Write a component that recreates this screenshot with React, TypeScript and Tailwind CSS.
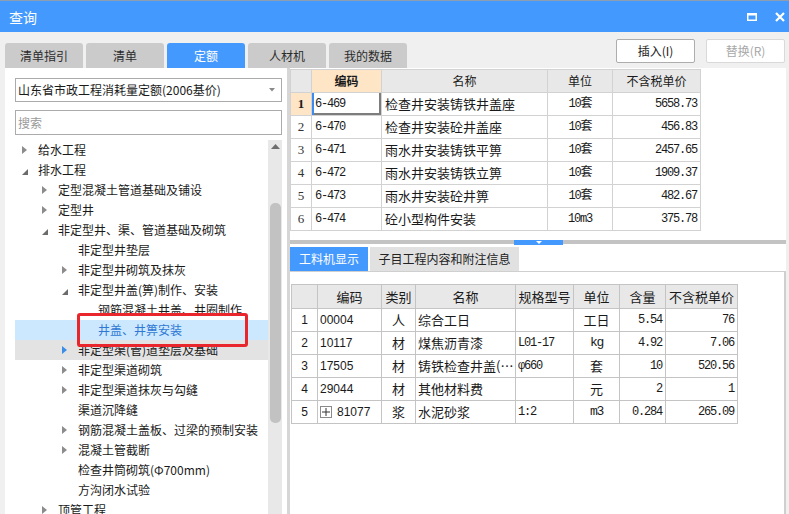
import React from "react";

type TreeNode = {
  level: number;
  arrow: "open" | "closed" | "none";
  text: string;
  state?: "selected" | "hover" | "clipped";
};

const treeData: TreeNode[] = [
  { level: 0, arrow: "closed", text: "给水工程" },
  { level: 0, arrow: "open", text: "排水工程" },
  { level: 1, arrow: "closed", text: "定型混凝土管道基础及铺设" },
  { level: 1, arrow: "closed", text: "定型井" },
  { level: 1, arrow: "open", text: "非定型井、渠、管道基础及砌筑" },
  { level: 2, arrow: "none", text: "非定型井垫层" },
  { level: 2, arrow: "closed", text: "非定型井砌筑及抹灰" },
  { level: 2, arrow: "open", text: "非定型井盖(箅)制作、安装" },
  { level: 3, arrow: "none", text: "钢筋混凝土井盖、井圈制作", state: "clipped" },
  { level: 3, arrow: "none", text: "井盖、井箅安装", state: "selected" },
  { level: 2, arrow: "closed", text: "非定型渠(管)道垫层及基础", state: "hover" },
  { level: 2, arrow: "closed", text: "非定型渠道砌筑" },
  { level: 2, arrow: "closed", text: "非定型渠道抹灰与勾缝" },
  { level: 2, arrow: "none", text: "渠道沉降缝" },
  { level: 2, arrow: "closed", text: "钢筋混凝土盖板、过梁的预制安装" },
  { level: 2, arrow: "closed", text: "混凝土管截断" },
  { level: 2, arrow: "none", text: "检查井筒砌筑(Φ700mm)" },
  { level: 2, arrow: "none", text: "方沟闭水试验" },
  { level: 1, arrow: "closed", text: "顶管工程" },
];

const indent = ["pl-[7px]", "pl-[27px]", "pl-[47px]", "pl-[67px]"];

const quotaRows = [
  { code: "6-469", name: "检查井安装铸铁井盖座", unit: "10套", price: "5658.73" },
  { code: "6-470", name: "检查井安装砼井盖座", unit: "10套", price: "456.83" },
  { code: "6-471", name: "雨水井安装铸铁平箅", unit: "10套", price: "2457.65" },
  { code: "6-472", name: "雨水井安装铸铁立箅", unit: "10套", price: "1909.37" },
  { code: "6-473", name: "雨水井安装砼井箅", unit: "10套", price: "482.67" },
  { code: "6-474", name: "砼小型构件安装", unit: "10m3", price: "375.78" },
];

const resRows = [
  { code: "00004", type: "人", name: "综合工日", spec: "", unit: "工日", qty: "5.54", price: "76" },
  { code: "10117", type: "材", name: "煤焦沥青漆", spec: "L01-17", unit: "kg", qty: "4.92", price: "7.06" },
  { code: "17505", type: "材", name: "铸铁检查井盖(…", spec: "φ660", unit: "套", qty: "10", price: "520.56" },
  { code: "29044", type: "材", name: "其他材料费", spec: "", unit: "元", qty: "2", price: "1" },
  { code: "81077", type: "浆", name: "水泥砂浆", spec: "1:2", unit: "m3", qty: "0.284", price: "265.09", plus: true },
];

const mono = "font-['Liberation_Mono','Noto_Sans_CJK_SC',monospace] tracking-[-1.2px]";

const Arrow = ({ kind, hover }: { kind: TreeNode["arrow"]; hover?: boolean }) => {
  if (kind === "closed") {
    return (
      <svg width="5" height="8" viewBox="0 0 5 8">
        <path d="M0 0L5 4L0 8Z" fill={hover ? "#3b8de8" : "#8c8c8c"} />
      </svg>
    );
  }
  if (kind === "open") {
    return (
      <svg width="6" height="6" viewBox="0 0 6 6" className="mt-[4px]">
        <path d="M6 0L6 6L0 6Z" fill="#6b6b6b" />
      </svg>
    );
  }
  return null;
};

const TreeRow = ({ node }: { node: TreeNode }) => {
  const bg =
    node.state === "selected"
      ? "bg-[#cce8ff] text-[#2f78d4]"
      : node.state === "hover"
        ? "bg-[#e3e3e3] text-[#1a1a1a]"
        : "text-[#1a1a1a]";
  return (
    <div className={`h-[20px] flex items-center shrink-0 ${indent[node.level]} ${bg}`}>
      <div className="w-[16px] h-[20px] flex items-center">
        <Arrow kind={node.arrow} hover={node.state === "hover"} />
      </div>
      {node.state === "clipped" ? (
        <div className="h-[13px] self-start overflow-hidden leading-[20px] whitespace-nowrap">{node.text}</div>
      ) : (
        <span className="whitespace-nowrap leading-[20px]">{node.text}</span>
      )}
    </div>
  );
};

const TopTab = ({ label, active }: { label: string; active?: boolean }) => (
  <div
    className={`w-[78px] h-[25px] rounded-t-[3px] flex items-center justify-center ${
      active ? "bg-[#4499ff] text-white" : "bg-[#cbcbcb] text-[#2b2b2b]"
    }`}
  >
    {label}
  </div>
);

export default function App() {
  return (
    <div className="w-[789px] h-[514px] overflow-hidden bg-[#f0f0f0] flex flex-col font-['Noto_Sans_CJK_SC','Noto_Sans',sans-serif] text-[12px] text-[#1a1a1a]">
      {/* title bar */}
      <div className="h-[32px] shrink-0 bg-[#4499ff] border-t border-[#8e9db0] flex items-center justify-between pl-[9px] pr-[3px]">
        <span className="text-white text-[14px] leading-none">查询</span>
        <div className="flex items-center gap-[18px] pr-[1px]">
          <svg width="10" height="8" viewBox="0 0 10 8">
            <rect x="0.75" y="1.25" width="8.5" height="6" fill="none" stroke="#fff" strokeWidth="1.5" />
            <rect x="0" y="0" width="10" height="2.5" fill="#fff" />
          </svg>
          <svg width="10" height="10" viewBox="0 0 10 10">
            <path d="M1 1L9 9M9 1L1 9" stroke="#fff" strokeWidth="2.2" />
          </svg>
        </div>
      </div>

      {/* tabs and buttons */}
      <div className="h-[36px] shrink-0 flex justify-between pl-[5px] pr-[4px]">
        <div className="flex gap-[3px] self-end">
          <TopTab label="清单指引" />
          <TopTab label="清单" />
          <TopTab label="定额" active />
          <TopTab label="人材机" />
          <TopTab label="我的数据" />
        </div>
        <div className="flex gap-[11px] mt-[7px]">
          <button className="w-[79px] h-[24px] bg-white border border-[#adadad] rounded-[2px] text-[#222]">插入(I)</button>
          <button className="w-[79px] h-[24px] bg-white border border-[#d9d9d9] rounded-[2px] text-[#a8a8a8]">替换(R)</button>
        </div>
      </div>

      {/* main */}
      <div className="flex-1 min-h-0 flex pl-[5px] pr-[3px]">
        {/* left panel */}
        <div className="w-[282px] bg-white flex flex-col pl-[10px] pt-[10px]">
          <div className="w-[267px] h-[24px] shrink-0 border border-[#ababab] flex items-center justify-between pl-[2px] pr-[6px]">
            <span>山东省市政工程消耗量定额(2006基价)</span>
            <svg width="6" height="4" viewBox="0 0 6 4">
              <path d="M0 0L6 0L3 3.5Z" fill="#8a8a8a" />
            </svg>
          </div>
          <div className="w-[267px] h-[25px] shrink-0 mt-[8px] border border-[#ababab] flex items-center pl-[2px] text-[#9a9a9a]">
            搜索
          </div>
          <div className="flex-1 min-h-0 flex mt-[5px] overflow-hidden">
            <div className="w-[253px] relative flex flex-col">
              {treeData.map((n, i) => (
                <TreeRow key={i} node={n} />
              ))}
              <div className="absolute left-[62px] top-[173px] w-[171px] h-[34px] border-[3px] border-[#e8262b] rounded-[3px]" />
            </div>
            <div className="w-[14px] bg-[#e8e8e8] flex flex-col items-center pt-[4px]">
              <svg width="9" height="5" viewBox="0 0 9 5">
                <path d="M0 5L4.5 0L9 5Z" fill="#6e6e6e" />
              </svg>
              <div className="w-[11px] h-[220px] mt-[54px] rounded-[5px] bg-[#c2c2c2]" />
            </div>
          </div>
        </div>

        <div className="w-[3px] bg-[#d6d6d6]" />

        {/* right panel */}
        <div className="flex-1 bg-white flex flex-col">
          {/* quota grid */}
          <div className="h-[172px] shrink-0 pt-[1px]">
            <table className="table-fixed border-collapse w-[410px]">
              <colgroup>
                <col className="w-[21px]" />
                <col className="w-[70px]" />
                <col className="w-[166px]" />
                <col className="w-[65px]" />
                <col className="w-[88px]" />
              </colgroup>
              <thead>
                <tr className="h-[23px]">
                  <th className="border border-[#d2d2d2] bg-[#e8e8e8] p-0" />
                  <th className="border border-[#d2d2d2] bg-[#fde5c6] p-0 font-bold">编码</th>
                  <th className="border border-[#d2d2d2] bg-[#e8e8e8] p-0 font-normal">名称</th>
                  <th className="border border-[#d2d2d2] bg-[#e8e8e8] p-0 font-normal">单位</th>
                  <th className="border border-[#d2d2d2] bg-[#e8e8e8] p-0 font-normal">不含税单价</th>
                </tr>
              </thead>
              <tbody>
                {quotaRows.map((r, i) => (
                  <tr key={r.code} className="h-[23px]">
                    <td
                      className={`border border-[#d2d2d2] p-0 text-center font-['Liberation_Serif',serif] text-[13px] ${
                        i === 0 ? "bg-[#fde5c6] font-bold" : "text-[#333]"
                      }`}
                    >
                      {i + 1}
                    </td>
                    <td
                      className={`border border-[#d2d2d2] px-[3px] p-0 ${mono} ${
                        i === 0 ? "shadow-[inset_2px_0_0_#3b8cf2,inset_-2px_-2px_0_#7d7d7d]" : ""
                      }`}
                    >
                      {r.code}
                    </td>
                    <td className="border border-[#d2d2d2] px-[3px] p-0 text-[13px] whitespace-nowrap">{r.name}</td>
                    <td className={`border border-[#d2d2d2] p-0 text-center ${mono}`}>{r.unit}</td>
                    <td className={`border border-[#d2d2d2] p-0 pr-[3px] text-right ${mono}`}>{r.price}</td>
                  </tr>
                ))}
              </tbody>
            </table>
          </div>

          {/* splitter */}
          <div className="h-[4px] shrink-0 bg-[#c3c3c3] flex justify-center">
            <div className="w-[49px] h-[5px] bg-[#4499ff] flex justify-center pt-[1px] pl-[2px]">
              <svg width="6" height="3" viewBox="0 0 6 3">
                <path d="M0 0L6 0L3 3Z" fill="#fff" />
              </svg>
            </div>
          </div>

          {/* lower tabs */}
          <div className="h-[27px] shrink-0 pt-[3px] flex gap-[2px]">
            <div className="w-[78px] h-[24px] bg-[#4499ff] text-white flex items-center justify-center">工料机显示</div>
            <div className="w-[149px] h-[24px] bg-[#e1e1e1] text-[#222] flex items-center justify-center">子目工程内容和附注信息</div>
          </div>

          {/* resource grid */}
          <div className="flex-1 min-h-0 border-t border-r-2 border-[#cfcfcf] pt-[12px] pl-[1px]">
            <table className="table-fixed border-collapse w-[446px]">
              <colgroup>
                <col className="w-[26px]" />
                <col className="w-[64px]" />
                <col className="w-[34px]" />
                <col className="w-[100px]" />
                <col className="w-[58px]" />
                <col className="w-[46px]" />
                <col className="w-[46px]" />
                <col className="w-[72px]" />
              </colgroup>
              <thead>
                <tr className="h-[24px]">
                  {["", "编码", "类别", "名称", "规格型号", "单位", "含量", "不含税单价"].map((h, i) => (
                    <th key={i} className="border border-[#c4c4c4] bg-[#e8e8e8] p-0 font-normal text-[13px] whitespace-nowrap">
                      {h}
                    </th>
                  ))}
                </tr>
              </thead>
              <tbody>
                {resRows.map((r, i) => (
                  <tr key={r.code} className="h-[23px]">
                    <td className="border border-[#c4c4c4] p-0 text-center font-['Liberation_Sans',sans-serif] text-[12px]">{i + 1}</td>
                    <td className="border border-[#c4c4c4] p-0 pl-[2px] font-['Liberation_Sans',sans-serif] text-[12px]">
                      <div className="flex items-center gap-[5px]">
                        {r.plus && (
                          <span className="w-[12px] h-[12px] border border-[#8a8a8a] flex items-center justify-center">
                            <svg width="8" height="8" viewBox="0 0 8 8">
                              <path d="M4 0V8M0 4H8" stroke="#333" strokeWidth="1" />
                            </svg>
                          </span>
                        )}
                        <span>{r.code}</span>
                      </div>
                    </td>
                    <td className="border border-[#c4c4c4] p-0 text-center text-[13px]">{r.type}</td>
                    <td className="border border-[#c4c4c4] p-0 pl-[2px] text-[13px] whitespace-nowrap overflow-hidden">{r.name}</td>
                    <td className={`border border-[#c4c4c4] p-0 pl-[2px] whitespace-nowrap ${mono}`}>{r.spec}</td>
                    <td className={`border border-[#c4c4c4] p-0 text-center text-[13px] ${r.unit === "kg" || r.unit === "m3" ? mono : ""}`}>{r.unit}</td>
                    <td className={`border border-[#c4c4c4] p-0 pr-[3px] text-right ${mono}`}>{r.qty}</td>
                    <td className={`border border-[#c4c4c4] p-0 pr-[3px] text-right ${mono}`}>{r.price}</td>
                  </tr>
                ))}
              </tbody>
            </table>
          </div>
        </div>
      </div>
    </div>
  );
}
